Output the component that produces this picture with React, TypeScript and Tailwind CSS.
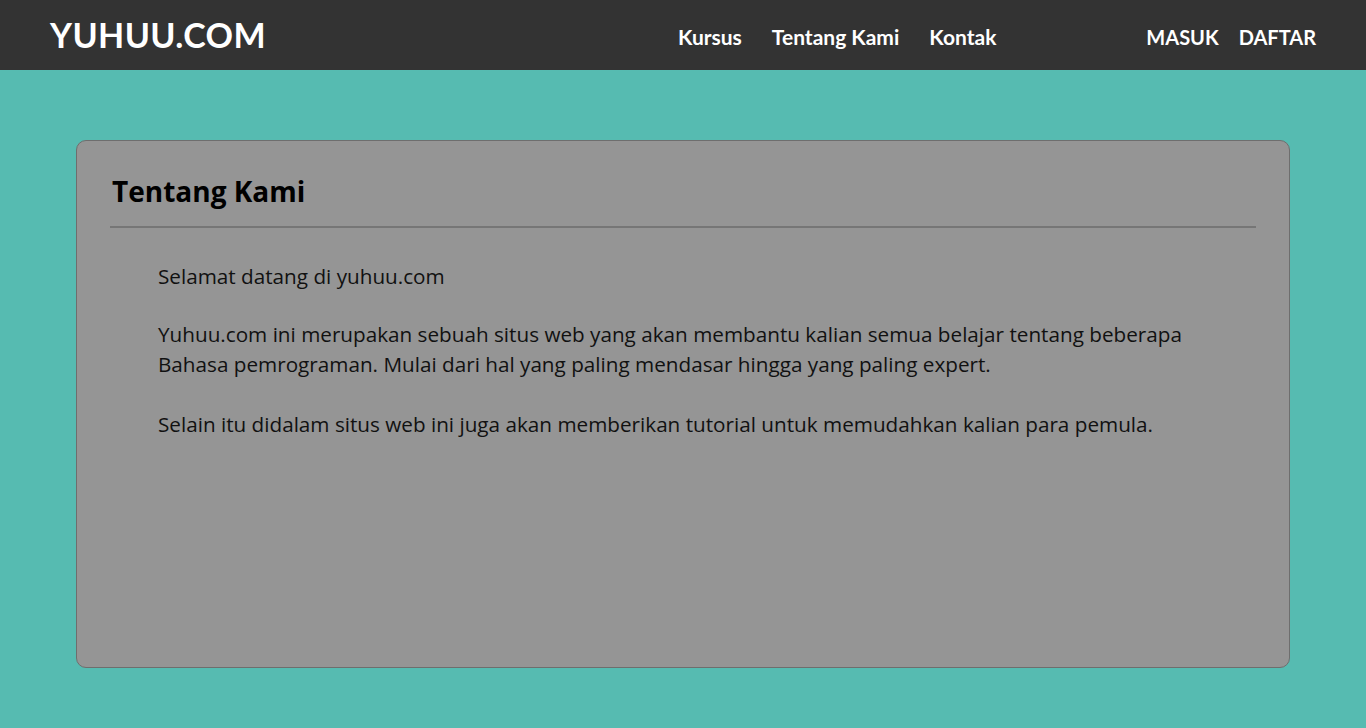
export default function App() {
  return (
    <div className="min-h-screen bg-[#56bbb1] font-['Lato',sans-serif]">
      {/* Top bar */}
      <header className="h-[70px] bg-[#333333] flex items-center px-[50px] text-white">
        <div className="text-[34px] font-bold tracking-[0.4px] leading-none">YUHUU.COM</div>
        <nav className="ml-auto mt-[3px] flex items-center gap-[30px] text-[21px] font-bold">
          <a href="#">Kursus</a>
          <a href="#">Tentang Kami</a>
          <a href="#">Kontak</a>
        </nav>
        <div className="ml-[150px] mt-[3px] flex items-center gap-[20px] text-[20px] font-bold">
          <a href="#">MASUK</a>
          <a href="#">DAFTAR</a>
        </div>
      </header>

      {/* Content card */}
      <main className="px-[76px] pt-[70px] pb-[60px]">
        <section className="h-[528px] rounded-[10px] border border-[#6e6e6e] bg-[#959595] px-[33px] pt-[30px] font-['Open_Sans',sans-serif]">
          <h1 className="px-[2px] text-[28px] font-bold text-black leading-[40px]">Tentang Kami</h1>
          <hr className="mt-[15px] border-t-2 border-[#767676]" />
          <div className="px-[48px] pt-[33px] text-[20.7px] leading-[30px] text-[#111]">
            <p>Selamat datang di yuhuu.com</p>
            <p className="mt-[28px]">
              Yuhuu.com ini merupakan sebuah situs web yang akan membantu kalian semua belajar tentang beberapa Bahasa pemrograman. Mulai dari hal yang paling mendasar hingga yang paling expert.
            </p>
            <p className="mt-[30px]">
              Selain itu didalam situs web ini juga akan memberikan tutorial untuk memudahkan kalian para pemula.
            </p>
          </div>
        </section>
      </main>
    </div>
  );
}
